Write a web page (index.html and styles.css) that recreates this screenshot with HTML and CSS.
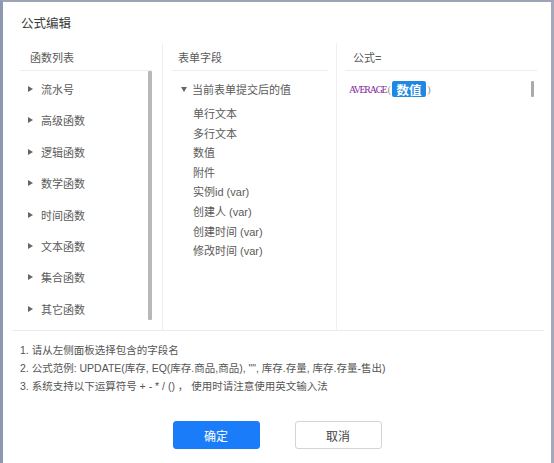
FILE: index.html
```html
<!DOCTYPE html>
<html lang="zh-CN">
<head>
<meta charset="utf-8">
<title>公式编辑</title>
<link rel="stylesheet" href="styles.css">
</head>
<body>
<div class="frame">
  <div class="title">公式编辑</div>
  <div class="panels">
    <div class="col col-fn">
      <div class="col-head">函数列表</div>
      <div class="fn-body">
        <ul class="fn-list">
          <li class="fn-item"><span class="tri-right"></span>流水号</li>
          <li class="fn-item"><span class="tri-right"></span>高级函数</li>
          <li class="fn-item"><span class="tri-right"></span>逻辑函数</li>
          <li class="fn-item"><span class="tri-right"></span>数学函数</li>
          <li class="fn-item"><span class="tri-right"></span>时间函数</li>
          <li class="fn-item"><span class="tri-right"></span>文本函数</li>
          <li class="fn-item"><span class="tri-right"></span>集合函数</li>
          <li class="fn-item"><span class="tri-right"></span>其它函数</li>
        </ul>
        <div class="scroll-bar"></div>
      </div>
    </div>
    <div class="col col-field">
      <div class="col-head">表单字段</div>
      <div class="tree">
        <div class="tree-root"><span class="tri-down"></span>当前表单提交后的值</div>
        <ul class="tree-children">
          <li>单行文本</li>
          <li>多行文本</li>
          <li>数值</li>
          <li>附件</li>
          <li>实例id (var)</li>
          <li>创建人 (var)</li>
          <li>创建时间 (var)</li>
          <li>修改时间 (var)</li>
        </ul>
      </div>
    </div>
    <div class="col col-formula">
      <div class="col-head">公式=</div>
      <div class="formula-body">
        <div class="formula"><span class="fn-name">AVERAGE</span><span class="paren">(</span><span class="badge">数值</span><span class="paren">)</span></div>
        <div class="mini-bar"></div>
      </div>
    </div>
  </div>
  <div class="notes">
    <p>1. 请从左侧面板选择包含的字段名</p>
    <p>2. 公式范例: UPDATE(库存, EQ(库存.商品,商品), "", 库存.存量, 库存.存量-售出)</p>
    <p>3. 系统支持以下运算符号 + - * / () ， 使用时请注意使用英文输入法</p>
  </div>
  <div class="actions">
    <button class="btn btn-primary">确定</button>
    <button class="btn btn-default">取消</button>
  </div>
</div>
</body>
</html>
```
FILE: styles.css
```css
* { box-sizing: border-box; }
html, body { margin: 0; padding: 0; background: #fff; }
body {
  font-family: "Liberation Sans", "Noto Sans CJK SC", sans-serif;
  color: #555;
}
ul, p { margin: 0; padding: 0; list-style: none; }

.frame {
  width: 554px;
  height: 463px;
  border-left: 3px solid #8d99ae;
  border-top: 2px solid #9ea4b6;
  border-right: 3px solid #a3a9ba;
  background: #fff;
  overflow: hidden;
}

.title {
  height: 41px;
  padding-left: 18px;
  display: flex;
  align-items: center;
  font-size: 12.5px;
  color: #3a3a3a;
}

.panels {
  margin-left: 9px;
  width: 532px;
  height: 288px;
  border-bottom: 1px solid #ebebeb;
  display: flex;
}

.col {
  height: 100%;
  display: flex;
  flex-direction: column;
}
.col-fn { width: 151px; border-right: 1px solid #efefef; }
.col-field { width: 174px; border-right: 1px solid #efefef; }
.col-formula { flex: 1; }

.col-head {
  height: 28px;
  border-bottom: 1px solid #eeeeee;
  display: flex;
  align-items: center;
  font-size: 11px;
  color: #5a5a5a;
}
.col-fn .col-head { margin: 0 10px 0 8px; padding-left: 10px; }
.col-field .col-head { margin: 0 8px 0 9px; padding-left: 6px; }
.col-formula .col-head { margin: 0 7px 0 8px; padding-left: 8px; }

.fn-body { display: flex; flex: 1; }
.fn-list { flex: 1; padding-top: 2.3px; padding-left: 16px; }
.fn-item {
  height: 31.4px;
  display: flex;
  align-items: center;
  font-size: 11px;
  color: #5a5a5a;
}
.tri-right {
  width: 0; height: 0;
  border-left: 5px solid #666;
  border-top: 3.5px solid transparent;
  border-bottom: 3.5px solid transparent;
  margin-right: 8px;
}
.scroll-bar {
  width: 4px;
  height: 249px;
  margin-right: 10px;
  background: #b8b8b8;
  border-radius: 1px;
}

.tree { padding-top: 7px; padding-left: 18px; }
.tree-root {
  height: 22px;
  display: flex;
  align-items: center;
  font-size: 11px;
  color: #5a5a5a;
}
.tri-down {
  width: 0; height: 0;
  border-top: 5px solid #666;
  border-left: 3.5px solid transparent;
  border-right: 3.5px solid transparent;
  margin-right: 5px;
}
.tree-children { padding-top: 3.3px; padding-left: 12px; }
.tree-children li {
  height: 19.6px;
  display: flex;
  align-items: center;
  font-size: 11px;
  color: #5a5a5a;
}

.formula-body {
  display: flex;
  align-items: flex-start;
  padding: 10px 10px 0 12px;
}
.formula { flex: 1; display: flex; align-items: center; height: 16px; }
.fn-name {
  font-family: "Liberation Serif", serif;
  font-size: 10px;
  letter-spacing: -1.3px;
  color: #86289a;
  margin-right: 1px;
}
.paren {
  font-family: "Liberation Serif", serif;
  font-size: 11px;
  color: #999;
  margin: 0 1px 0 0;
}
.badge {
  width: 34px;
  height: 16px;
  border-radius: 2px;
  background: #1f88e3;
  color: #fff;
  font-family: "Noto Sans CJK SC", sans-serif;
  font-size: 12.5px;
  font-weight: bold;
  display: flex;
  align-items: center;
  justify-content: center;
  margin-right: 1px;
}
.mini-bar {
  width: 3px;
  height: 16px;
  background: #aaaaaa;
  border-radius: 1px;
}

.notes {
  padding: 10px 0 0 17px;
  font-size: 10.5px;
  line-height: 18px;
  color: #555;
}

.actions {
  margin-top: 26px;
  display: flex;
  justify-content: center;
  gap: 35px;
}
.btn {
  width: 87px;
  height: 28px;
  border-radius: 3px;
  font-family: "Noto Sans CJK SC", sans-serif;
  font-size: 12px;
  cursor: pointer;
  padding: 0;
}
.btn-primary { background: #1a7cf8; border: 1px solid #1a7cf8; color: #fff; }
.btn-default { background: #fff; border: 1px solid #d4d4d4; color: #444; }
```
